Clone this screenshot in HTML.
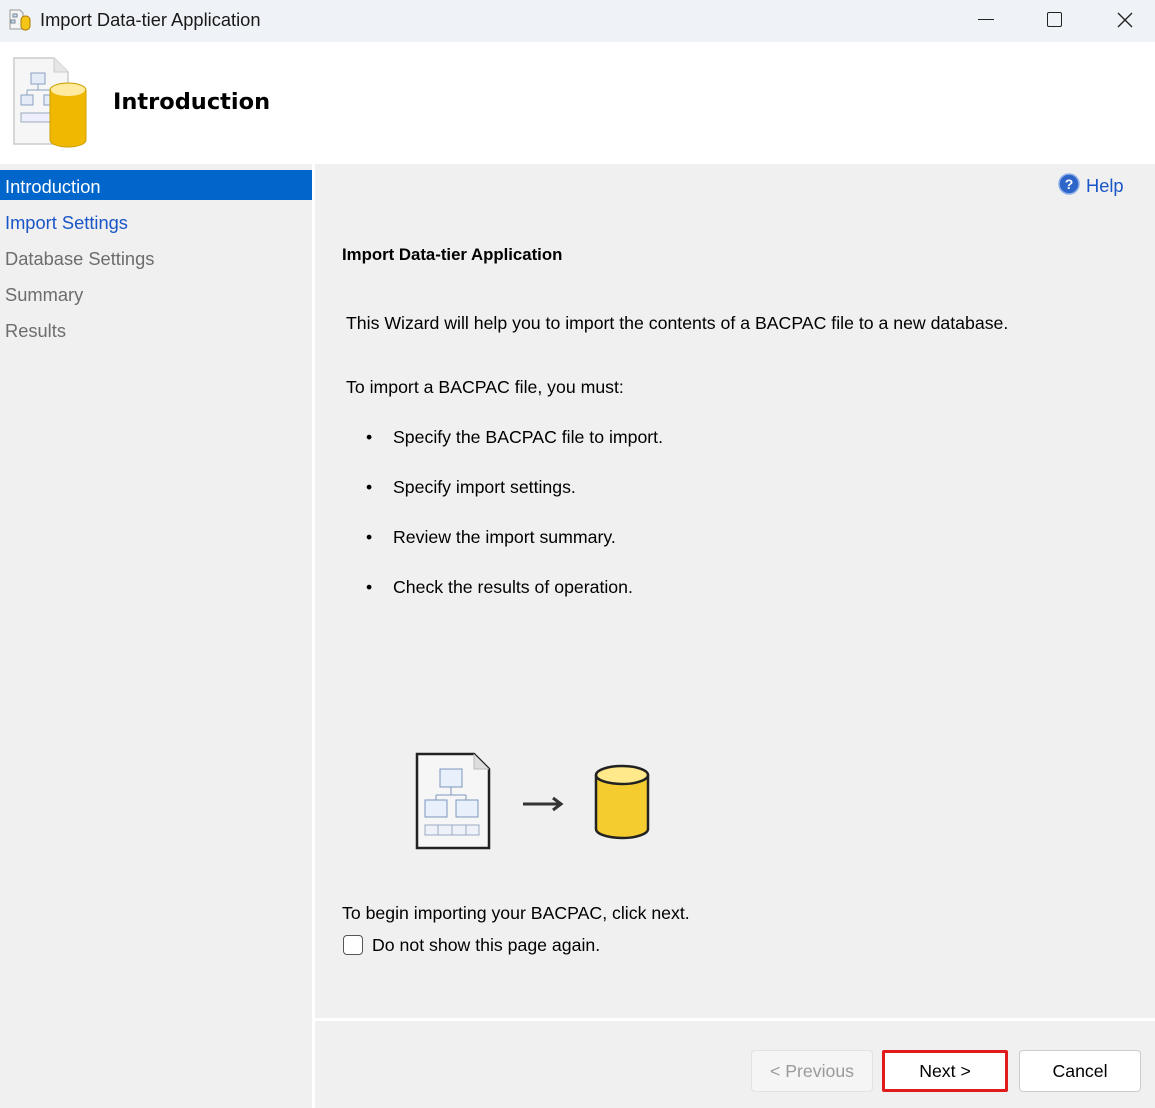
<!DOCTYPE html>
<html><head><meta charset="utf-8"><style>
*{margin:0;padding:0;box-sizing:border-box}
body{width:1155px;height:1108px;overflow:hidden;background:#fff;font-family:"Liberation Sans",sans-serif;position:relative;color:#000}
.abs{position:absolute}
.t{font-size:17.7px;white-space:nowrap}
.s{font-size:18.3px;white-space:nowrap}
</style></head><body>
<div class="abs" style="left:0;top:0;width:1155px;height:42px;background:#eff2f6"></div>
<svg class="abs" style="left:8px;top:8px" width="24" height="24" viewBox="0 0 24 24"><path d="M2 2h10l3 3v16H2z" fill="#f4f4f4" stroke="#999"/><rect x="5" y="6" width="4" height="3" fill="#cde" stroke="#789"/><rect x="3" y="12" width="4" height="3" fill="#cde" stroke="#789"/><rect x="13" y="8" width="9" height="14" rx="4" fill="#f5c518" stroke="#a77a00"/></svg>
<div class="abs" style="left:40px;top:9px;font-size:18.3px;color:#1a1a1a;white-space:nowrap">Import Data-tier Application</div>
<div class="abs" style="left:978px;top:19px;width:16px;height:1px;background:#222"></div>
<div class="abs" style="left:1047px;top:12px;width:15px;height:15px;border:1.5px solid #222;border-radius:2px"></div>
<svg class="abs" style="left:1117px;top:12px" width="16" height="16"><path d="M1 1L15 15M15 1L1 15" stroke="#222" stroke-width="1.4"/></svg>

<svg class="abs" style="left:12px;top:56px" width="76" height="92" viewBox="0 0 76 92"><path d="M2 2h40l14 14v72H2z" fill="#f6f6f6" stroke="#ccc" stroke-width="1.5"/><path d="M42 2v14h14" fill="#e6e6e6" stroke="#ccc"/><rect x="19" y="17" width="14" height="11" fill="#e4ecf8" stroke="#8aa0c0"/><path d="M26 28v6M15 34h24M15 34v5M39 34v5" stroke="#8aa0c0" fill="none"/><rect x="9" y="39" width="12" height="10" fill="#e4ecf8" stroke="#8aa0c0"/><rect x="32" y="39" width="12" height="10" fill="#e4ecf8" stroke="#8aa0c0"/><rect x="9" y="57" width="32" height="9" fill="#eef" stroke="#9ab"/><ellipse cx="56" cy="34" rx="18" ry="7" fill="#ffe680" stroke="#c8a000"/><path d="M38 34v50a18 7 0 0 0 36 0V34" fill="#f0b800" stroke="#c8a000"/><ellipse cx="56" cy="34" rx="17" ry="6" fill="#ffeaa0"/></svg>
<div class="abs" style="left:113px;top:89px;font-size:22.5px;font-weight:bold;font-family:'DejaVu Sans',sans-serif;white-space:nowrap">Introduction</div>

<div class="abs" style="left:0;top:164px;width:312px;height:944px;background:#f0f0f0"></div>
<div class="abs" style="left:315px;top:164px;width:840px;height:854px;background:#f0f0f0"></div>
<div class="abs" style="left:315px;top:1021px;width:840px;height:87px;background:#f0f0f0"></div>
<div class="abs" style="left:0;top:170px;width:312px;height:30px;background:#0066cc"></div>
<div class="abs s" style="left:5px;top:176px;color:#fff">Introduction</div>
<div class="abs s" style="left:5px;top:212px;color:#1a56c8">Import Settings</div>
<div class="abs s" style="left:5px;top:248px;color:#6d6d6d">Database Settings</div>
<div class="abs s" style="left:5px;top:284px;color:#6d6d6d">Summary</div>
<div class="abs s" style="left:5px;top:320px;color:#6d6d6d">Results</div>

<svg class="abs" style="left:1058px;top:173px" width="22" height="22"><circle cx="11" cy="11" r="10" fill="#2d66c8" stroke="#8fb0e8" stroke-width="1.5"/><text x="11" y="16" text-anchor="middle" font-size="14" font-weight="bold" fill="#fff" font-family="Liberation Sans">?</text></svg>
<div class="abs s" style="left:1086px;top:175px;color:#1a56c8">Help</div>

<div class="abs" style="left:342px;top:245px;font-weight:bold;font-size:16.8px;white-space:nowrap">Import Data-tier Application</div>
<div class="abs t" style="left:346px;top:313px">This Wizard will help you to import the contents of a BACPAC file to a new database.</div>
<div class="abs t" style="left:346px;top:377px">To import a BACPAC file, you must:</div>
<div class="abs t" style="left:366px;top:427px">•</div><div class="abs t" style="left:393px;top:427px">Specify the BACPAC file to import.</div>
<div class="abs t" style="left:366px;top:477px">•</div><div class="abs t" style="left:393px;top:477px">Specify import settings.</div>
<div class="abs t" style="left:366px;top:527px">•</div><div class="abs t" style="left:393px;top:527px">Review the import summary.</div>
<div class="abs t" style="left:366px;top:577px">•</div><div class="abs t" style="left:393px;top:577px">Check the results of operation.</div>

<svg class="abs" style="left:410px;top:750px" width="250" height="102" viewBox="0 0 250 102"><path d="M7 4h57l15 15v79H7z" fill="#f6f6f6" stroke="#222" stroke-width="2.5"/><path d="M64 4v15h15" fill="#ddd" stroke="#bbb"/><rect x="30" y="19" width="22" height="18" fill="#e8f0fc" stroke="#7d95bd"/><path d="M41 37v8M26 45h30M26 45v5M56 45v5" stroke="#7d95bd" fill="none"/><rect x="15" y="50" width="22" height="17" fill="#e8f0fc" stroke="#7d95bd"/><rect x="46" y="50" width="22" height="17" fill="#e8f0fc" stroke="#7d95bd"/><rect x="15" y="75" width="54" height="10" fill="#eef2f8" stroke="#9aabc5"/><path d="M28 75v10M42 75v10M56 75v10" stroke="#9aabc5"/><path d="M113 54h36" stroke="#333" stroke-width="3"/><path d="M143 48l8 6-8 6" fill="none" stroke="#333" stroke-width="3"/><path d="M186 25v54a26 9 0 0 0 52 0V25" fill="#f5cc30" stroke="#222" stroke-width="2.5"/><ellipse cx="212" cy="25" rx="26" ry="9" fill="#ffe98a" stroke="#222" stroke-width="2.5"/></svg>

<div class="abs t" style="left:342px;top:903px">To begin importing your BACPAC, click next.</div>
<div class="abs" style="left:343px;top:935px;width:20px;height:20px;border:1.5px solid #555;border-radius:4px;background:#fff"></div>
<div class="abs t" style="left:372px;top:935px">Do not show this page again.</div>

<div class="abs" style="left:751px;top:1050px;width:122px;height:42px;border:1px solid #e2e2e2;border-radius:4px;background:#f5f5f5;color:#9a9a9a;font-size:17.7px;text-align:center;line-height:40px">&lt; Previous</div>
<div class="abs" style="left:882px;top:1050px;width:126px;height:42px;border:3px solid #e01b1b;border-radius:2px;background:#fff;font-size:17.7px;text-align:center;line-height:36px">Next &gt;</div>
<div class="abs" style="left:1019px;top:1050px;width:122px;height:42px;border:1px solid #ccc;border-radius:4px;background:#fff;font-size:17.7px;text-align:center;line-height:40px">Cancel</div>
</body></html>
